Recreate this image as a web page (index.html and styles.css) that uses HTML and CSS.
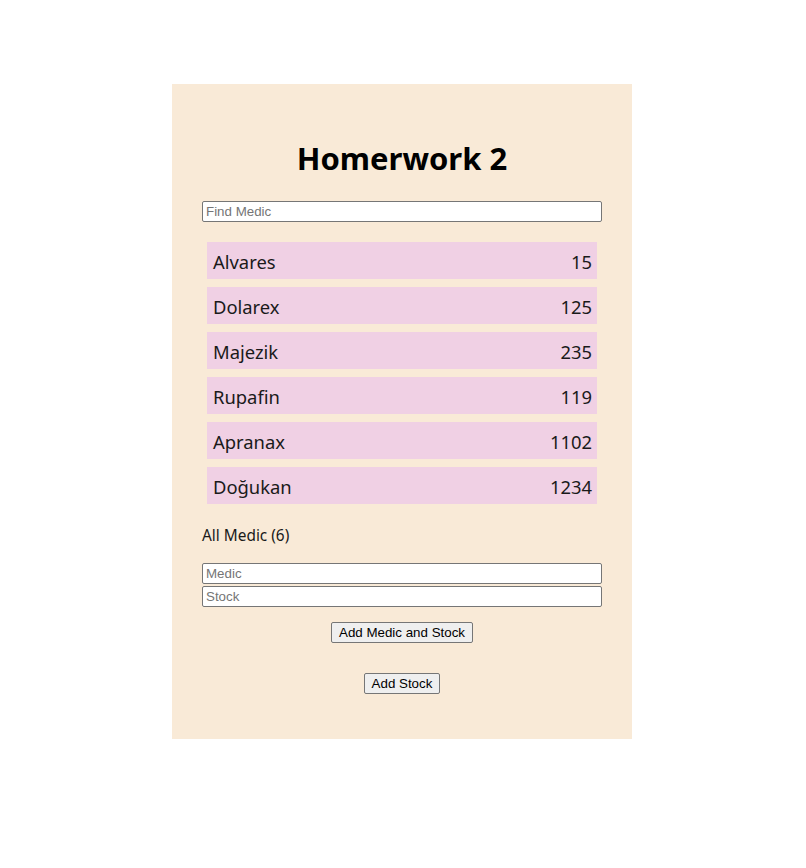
FILE: index.html
```html
<!DOCTYPE html>
<html>
<head>
<meta charset="utf-8">
<link rel="stylesheet" href="styles.css">
</head>
<body>
<div class="app">
  <h1 class="title">Homerwork 2</h1>
  <input class="field" type="text" placeholder="Find Medic">
  <ul class="list">
    <li class="row"><span>Alvares</span><span>15</span></li>
    <li class="row"><span>Dolarex</span><span>125</span></li>
    <li class="row"><span>Majezik</span><span>235</span></li>
    <li class="row"><span>Rupafin</span><span>119</span></li>
    <li class="row"><span>Apranax</span><span>1102</span></li>
    <li class="row"><span>Doğukan</span><span>1234</span></li>
  </ul>
  <div class="count">All Medic (6)</div>
  <div class="form">
    <input class="field" type="text" placeholder="Medic">
    <input class="field" type="text" placeholder="Stock">
  </div>
  <div class="actions">
    <button class="btn">Add Medic and Stock</button>
  </div>
  <div class="actions second">
    <button class="btn">Add Stock</button>
  </div>
</div>
</body>
</html>
```
FILE: styles.css
```css
html, body {
  margin: 0;
  padding: 0;
  background: #fff;
}
body {
  display: flex;
  justify-content: center;
  padding: 84px 2px 129px 0;
}
.app {
  width: 460px;
  box-sizing: border-box;
  padding: 54px 30px 45px;
  background: #f9ead7;
  font-family: "Noto Sans", "Open Sans", sans-serif;
  color: #111;
  display: flex;
  flex-direction: column;
}
.title {
  margin: 0 0 23px;
  font-size: 31px;
  line-height: 40px;
  font-weight: 700;
  text-align: center;
  color: #000;
}
.field {
  display: block;
  width: 400px;
  height: 21px;
  box-sizing: border-box;
  margin: 0;
  padding: 1px 3px;
  border: 1px solid #767676;
  border-radius: 2px;
  background: #fff;
  font-family: "Liberation Sans", Arial, sans-serif;
  font-size: 13.33px;
  color: #000;
}
.field::placeholder {
  color: #757575;
}
.list {
  list-style: none;
  margin: 20px 0 0;
  padding: 0 5px;
  display: flex;
  flex-direction: column;
  gap: 8px;
}
.row {
  height: 37px;
  box-sizing: border-box;
  display: flex;
  justify-content: space-between;
  align-items: center;
  padding: 2px 5px 0 6px;
  background: #f0d0e4;
  font-size: 18.4px;
  color: #1a1a1a;
}
.count {
  margin-top: 21px;
  font-size: 15.4px;
  line-height: 21px;
  color: #1a1a1a;
}
.form {
  margin-top: 17px;
  display: flex;
  flex-direction: column;
  gap: 2px;
}
.actions {
  margin-top: 15px;
  display: flex;
  justify-content: center;
}
.actions.second {
  margin-top: 30px;
}
.btn {
  height: 21px;
  box-sizing: border-box;
  margin: 0;
  padding: 1px 7px;
  border: 1px solid #767676;
  border-radius: 2px;
  background: #efefef;
  font-family: "Liberation Sans", Arial, sans-serif;
  font-size: 13.33px;
  color: #000;
}
```
